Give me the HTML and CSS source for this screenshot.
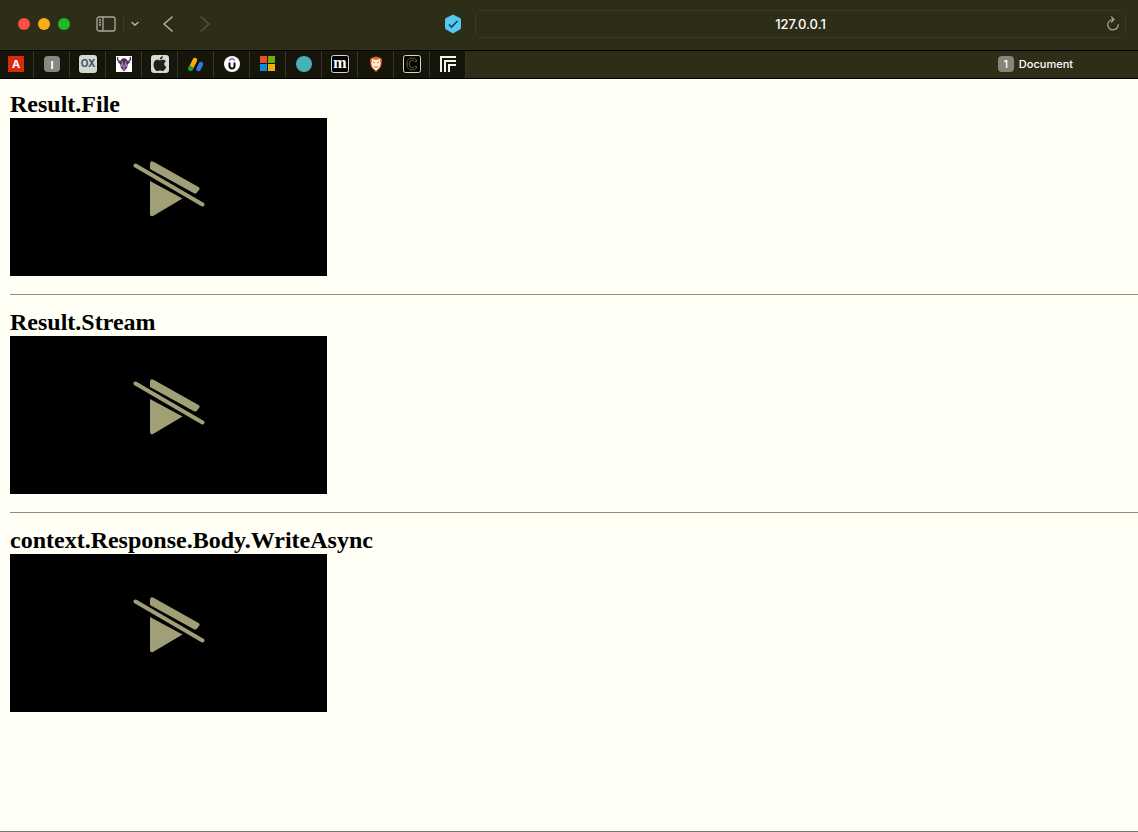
FILE: index.html
```html
<!DOCTYPE html>
<html lang="en">
<head>
<meta charset="utf-8">
<title>Document</title>
<link rel="stylesheet" href="styles.css">
</head>
<body>
<svg class="defs" width="0" height="0" aria-hidden="true">
  <symbol id="no-play" viewBox="0 0 72 56">
    <path d="M17 3q0-4 4-2L65.500 26q2 1.500 .5 3l-2.500 3q-1 1-3 0L17 8z"/>
    <path d="M17 20L49.500 37.500 20 55q-3 1-3-2z"/>
    <path d="M2.500 4.500L69.500 43.500" fill="none" stroke="currentColor" stroke-width="4" stroke-linecap="round"/>
  </symbol>
</svg>
<header class="chrome">
  <div class="toolbar">
    <div class="toolbar-left">
      <div class="lights">
        <button class="light close" aria-label="Close"></button>
        <button class="light minimize" aria-label="Minimize"></button>
        <button class="light maximize" aria-label="Zoom"></button>
      </div>
      <button class="tool sidebar" aria-label="Sidebar">
        <svg width="20" height="16" viewBox="0 0 20 16" fill="none" stroke="#a9a9a5" stroke-width="1.3"><rect x="1" y="1" width="18" height="14" rx="2"/><path d="M7 1v14M3 4h2M3 6.500h2M3 9h2"/></svg>
      </button>
      <button class="tool menu" aria-label="Tab groups">
        <svg width="8" height="6" viewBox="0 0 8 6" fill="none" stroke="#b8b8b0" stroke-width="1.500" stroke-linecap="round"><path d="M1 1.500l3 2.500 3-2.500"/></svg>
      </button>
      <button class="tool back" aria-label="Back">
        <svg width="11" height="16" viewBox="0 0 11 16" fill="none" stroke="#b5b5b0" stroke-width="1.500" stroke-linecap="round" stroke-linejoin="round"><path d="M9 1L1 8l8 7"/></svg>
      </button>
      <button class="tool forward" aria-label="Forward" disabled>
        <svg width="11" height="16" viewBox="0 0 11 16" fill="none" stroke="#55553a" stroke-width="1.500" stroke-linecap="round" stroke-linejoin="round"><path d="M2 1l8 7-8 7"/></svg>
      </button>
      <button class="tool shield" aria-label="Privacy">
        <svg width="18" height="20" viewBox="0 0 18 20"><path d="M9 .5l7 3.500q1 .5 1 1.500v8q0 1.500-1 2l-7 4-7-4q-1-.5-1-2v-8Q1 4.500 2 4z" fill="#55c8ef"/><path d="M5 10.500l2.500 2.500 6-6" fill="none" stroke="#153e52" stroke-width="1.700"/></svg>
      </button>
    </div>
    <form class="address">
      <input class="url" type="text" value="127.0.0.1" aria-label="Address">
      <button class="reload" type="button" aria-label="Reload">
        <svg width="14" height="16" viewBox="0 0 14 16" fill="none" stroke="#a8a8a0" stroke-width="1.200" stroke-linecap="round"><path d="M7 3.500A5.200 5.200 0 1 0 12.200 8.500M5.500 1l2.500 2.500L5.500 6"/></svg>
      </button>
    </form>
  </div>
  <nav class="tabs" aria-label="Tabs">
    <button class="pinned" aria-label="A"><svg width="18" height="18"><path d="M1 1h16v16H1z" fill="#d92b0c"/><text class="sans" x="9" y="13" font-size="11" fill="#fff">A</text></svg></button>
    <button class="pinned" aria-label="I"><svg width="18" height="18"><rect x="1" y="1" width="16" height="16" rx="4" fill="#888882"/><text class="sans" x="9" y="14" font-size="11" fill="#fff">I</text></svg></button>
    <button class="pinned" aria-label="OX"><svg width="18" height="18"><rect width="18" height="18" rx="3" fill="#d4d8d0"/><text class="sans" x="9" y="12" font-size="10" fill="#3c5264">OX</text></svg></button>
    <button class="pinned" aria-label="Purple bull"><svg width="18" height="18"><path d="M1 1h16v16H1z" fill="#fff"/><path d="M3 2Q1 6 6 6.500M15 2q2 4-3 4.500" fill="none" stroke="#443052" stroke-width="1.300"/><path d="M6.500 4L9 3l2.500 1 1 2 3 1-2.500 2-1 4L9 16.500 6 13 5 9 2.500 7l3-1z" fill="#503258"/><path d="M7 6.500l1.500 6M11 6.500l-1.500 6M7.500 14h3M6 9l1 3M12 9l-1 3" fill="none" stroke="#b695d5"/></svg></button>
    <button class="pinned" aria-label="Apple"><svg width="18" height="18"><rect width="18" height="18" rx="3" fill="#d9d9d2"/><path d="M9 5.500c1-.3 2-1 3.400-.8 1.200.1 2 .7 2.500 1.500-2.400 1.500-2 4.600.4 5.600-.7 2-2 4.200-3.500 4.200-1.100 0-1.500-.6-2.800-.6S7.300 16 6.200 16C4.400 16 2.600 12.600 2.600 9.700c0-3 1.700-4.900 3.800-4.900 1 0 1.800.5 2.600.7zM8.800 4.700c0-2 1.300-3.500 3-3.700.1 2-1.300 3.600-3 3.700z" fill="#20201e"/></svg></button>
    <button class="pinned" aria-label="Ads"><svg width="18" height="18" fill="none" stroke-linecap="round" stroke-width="4.500"><path d="M4 13L8 5" stroke="#f5ad13"/><path d="M11.500 14l2.500-5" stroke="#3675e2"/><circle cx="3.500" cy="13.500" r="2.500" fill="#239946"/></svg></button>
    <button class="pinned" aria-label="Udemy"><svg width="18" height="18"><circle cx="9" cy="9" r="8" fill="#fff"/><path d="M6 5.500l3-2 3 2" fill="none" stroke="#9b4bc7" stroke-width="1.500"/><path d="M6.500 7.500V11a2.500 2.500 0 0 0 5 0V7.500" fill="none" stroke="#111" stroke-width="2"/></svg></button>
    <button class="pinned" aria-label="Microsoft"><svg width="18" height="18"><path d="M1 1h7v7H1z" fill="#f04b22"/><path d="M9 1h7v7H9z" fill="#72ad0b"/><path d="M1 9h7v7H1z" fill="#078ed6"/><path d="M9 9h7v7H9z" fill="#f4ad0c"/></svg></button>
    <button class="pinned" aria-label="Circle"><svg width="18" height="18"><circle cx="9" cy="9" r="8" fill="#4bafba"/></svg></button>
    <button class="pinned" aria-label="m"><svg width="18" height="18"><rect x=".5" y=".5" width="17" height="17" rx="2" fill="#000" stroke="#d5d5cf"/><text class="serif" x="9" y="13" font-size="16" fill="#fff">m</text></svg></button>
    <button class="pinned" aria-label="Mask"><svg width="18" height="18"><path d="M4 3l5-1.500L14 3l1 2-1 7-5 5-5-5-1-7z" fill="#e66829"/><path d="M5 4l4 1 4-1 .5 5-1.500 4-3 2.500L6 13 4.500 9z" fill="#fff2df"/><path d="M6 7l2 1M12 7l-2 1M7 11.500q2 1.500 4 0" stroke="#d65f28" fill="none"/></svg></button>
    <button class="pinned" aria-label="C"><svg width="18" height="18"><rect x=".5" y=".5" width="17" height="17" rx="2" fill="#050505" stroke="#d5d5cf"/><path d="M13.500 6.500V5Q12 3 9 3 4 3 4 9t5 6q3 0 4.500-2v-1.500h-2q-1 1.500-2.500 1.500-2.500 0-2.500-4T9 5q1.500 0 2.500 1.500z" fill="none" stroke="#626226"/></svg></button>
    <button class="pinned" aria-label="Corners"><svg width="18" height="18" fill="none" stroke="#f2f2ef" stroke-width="2"><path d="M2 17V2h15M6 17V6h11M10 17v-7h7"/></svg></button>
    <button class="active-tab"><span class="badge">1</span><span>Document</span></button>
  </nav>
</header>
<main class="page">
  <section class="sample">
    <h2>Result.File</h2>
    <div class="video" role="img" aria-label="Video unavailable"><svg class="no-play"><use href="#no-play"/></svg></div>
  </section>
  <hr>
  <section class="sample">
    <h2>Result.Stream</h2>
    <div class="video" role="img" aria-label="Video unavailable"><svg class="no-play"><use href="#no-play"/></svg></div>
  </section>
  <hr>
  <section class="sample">
    <h2>context.Response.Body.WriteAsync</h2>
    <div class="video" role="img" aria-label="Video unavailable"><svg class="no-play"><use href="#no-play"/></svg></div>
  </section>
</main>
</body>
</html>
```
FILE: styles.css
```css
* { box-sizing: border-box; }
body {
  margin: 0;
  min-height: 100vh;
  display: flex;
  flex-direction: column;
  background: #fffff6;
  color: #000;
  border-bottom: 1px solid #77776a;
}
.defs { position: absolute; }
button {
  padding: 0;
  border: 0;
  background: none;
  color: inherit;
  font: inherit;
}
button svg { display: block; }
.chrome {
  background: #2e2d18;
  color: #fff;
  font-family: Inter, "Liberation Sans", sans-serif;
  border-bottom: 1px solid #000;
}
.toolbar {
  display: flex;
  height: 50px;
  padding-right: 12px;
}
.toolbar-left {
  display: flex;
  align-items: center;
  width: 475px;
  height: 48px;
  padding: 0 13px 0 18px;
  flex: none;
}
.lights { display: flex; gap: 8px; margin-right: 26px; }
.light { width: 12px; height: 12px; border-radius: 50%; }
.close { background: #fa4d45; }
.minimize { background: #fbad1a; }
.maximize { background: #1cb92b; }
.sidebar { padding-right: 7px; border-right: 1px solid #3d3d2d; }
.menu { margin: 0 24px 0 7px; }
.back { margin-right: 25px; }
.shield { margin-left: auto; }
.address {
  display: flex;
  flex: 1;
  align-items: center;
  height: 28px;
  margin: 10px 0 0;
  padding: 0 5px;
  border: 1px solid #3c3c18;
  border-radius: 7px;
}
.url {
  flex: 1;
  min-width: 0;
  padding: 0 0 0 14px;
  border: 0;
  outline: 0;
  background: none;
  color: #fff;
  font: 500 13px/18px Inter, "Liberation Sans", sans-serif;
  text-align: center;
}
.tabs {
  display: flex;
  height: 28px;
  border-top: 1px solid #000;
}
.pinned {
  display: flex;
  align-items: center;
  justify-content: center;
  width: 36px;
  padding-bottom: 2px;
  flex: none;
  background: #15150a;
  border-right: 1px solid #35352a;
}
.pinned:first-child { width: 34px; padding-right: 1px; }
.sans { font-family: Inter, sans-serif; font-weight: 700; text-anchor: middle; }
.serif { font-family: "Liberation Serif", serif; font-weight: 700; text-anchor: middle; }
.active-tab {
  display: flex;
  flex: 1;
  align-items: center;
  justify-content: flex-end;
  gap: 5px;
  padding: 0 65px 2px 0;
  font-size: 11px;
  font-weight: 500;
}
.badge {
  width: 16px;
  height: 16px;
  border-radius: 4px;
  background: #85857b;
  line-height: 16px;
  text-align: center;
}
.page {
  padding: 11px 0 0 10px;
  font-family: "Liberation Serif", "Times New Roman", serif;
}
h2 { margin: 0; font-size: 24px; line-height: 28px; }
.video {
  display: flex;
  justify-content: center;
  width: 317px;
  height: 158px;
  padding-top: 43px;
  background: #000;
}
.no-play { width: 72px; height: 56px; color: #a19f75; fill: currentColor; }
hr { height: 1px; margin: 18px 0 13px; border: 0; background: #8e8e70; }
```
